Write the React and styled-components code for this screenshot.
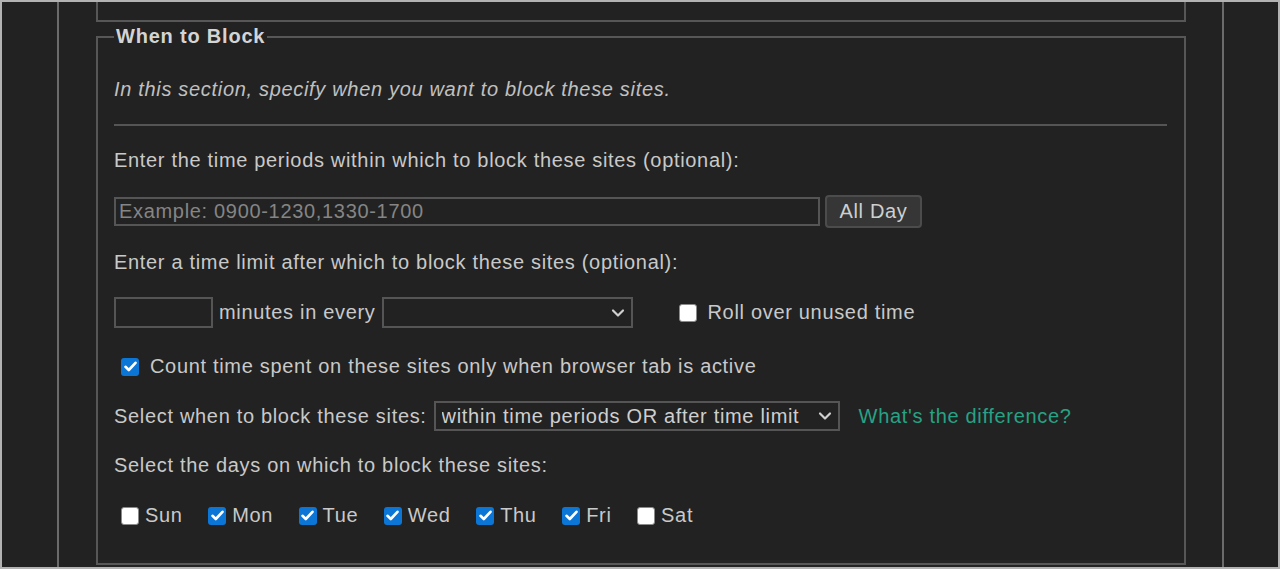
import React from 'react'
import styled, { createGlobalStyle } from 'styled-components'

const Global = createGlobalStyle`
  html, body { margin: 0; padding: 0; background: #222; }
  body { font-family: "Liberation Sans", Arial, sans-serif; }
`

const Frame = styled.div`
  box-sizing: border-box;
  height: 569px;
  border: 2px solid #b3b3b3;
  background: #222;
  padding-left: 55px;
  overflow: hidden;
  display: flex;
`

const Column = styled.div`
  width: 1167px;
  box-sizing: border-box;
  border-left: 2px solid #6b6b6b;
  border-right: 2px solid #6b6b6b;
  padding: 0 36px 0 37px;
`

const PrevBox = styled.div`
  height: 18px;
  border: 2px solid #575757;
  border-top: none;
`

const Fieldset = styled.fieldset`
  margin: 3px 0 0;
  border: 2px solid #575757;
  padding: 0 17px 36px 16px;
  min-width: 0;
`

const Legend = styled.legend`
  padding: 0 2px;
  font-size: 20px;
  line-height: 23px;
  font-weight: bold;
  letter-spacing: 0.8px;
  color: #d4d4d4;
`

const Body = styled.div`
  display: flex;
  flex-direction: column;
  gap: 23px;
  padding-top: 30px;
  font-size: 20px;
  line-height: 23px;
  letter-spacing: 0.68px;
  color: #c9c9c9;
`

const Desc = styled.div`
  font-style: italic;
  color: #c0c0c0;
`

const Rule = styled.div`
  height: 2px;
  background: #555;
`

const Text = styled.div``

const Row = styled.div`
  display: flex;
  align-items: center;
  height: ${p => p.$h || 23}px;
  margin-top: ${p => p.$mt || 0}px;
`

const Field = styled.input`
  box-sizing: border-box;
  width: ${p => p.$w}px;
  height: ${p => p.$h}px;
  background: #222;
  border: 2px solid #555;
  color: #c9c9c9;
  font: 20px "Liberation Sans", Arial, sans-serif;
  letter-spacing: 0.68px;
  padding: 0 3px;
  outline: none;
  &::placeholder { color: #858585; }
`

const Button = styled.button`
  box-sizing: border-box;
  width: 97px;
  height: 33px;
  margin-left: 5px;
  background: #363636;
  border: 2px solid #4c4c4c;
  border-radius: 4px;
  color: #cfcfcf;
  font: 20px "Liberation Sans", Arial, sans-serif;
  letter-spacing: 0.68px;
  padding: 0;
`

const SelectWrap = styled.div`
  position: relative;
  margin: 0 ${p => p.$mr || 0}px 0 ${p => p.$ml || 0}px;
`

const Select = styled.select`
  box-sizing: border-box;
  appearance: none;
  width: ${p => p.$w}px;
  height: ${p => p.$h}px;
  background: #222;
  border: 2px solid #555;
  border-radius: 0;
  color: #cfcfcf;
  font: 20px "Liberation Sans", Arial, sans-serif;
  letter-spacing: 0.68px;
  padding: 0 0 0 6px;
  outline: none;
`

const Chevron = styled.svg`
  position: absolute;
  right: 8px;
  top: 50%;
  margin-top: -5px;
  pointer-events: none;
`

const Label = styled.span`
  margin: 0 ${p => p.$mr || 0}px 0 ${p => p.$ml || 0}px;
`

const Box = styled.span`
  box-sizing: border-box;
  display: inline-flex;
  align-items: center;
  justify-content: center;
  width: 18px;
  height: 18px;
  margin-left: ${p => p.$ml || 0}px;
  border-radius: 3px;
  background: ${p => (p.$on ? '#0c76d6' : '#fff')};
  border: ${p => (p.$on ? 'none' : '1px solid #8a8a8a')};
  flex-shrink: 0;
`

const Link = styled.a`
  margin-left: 19px;
  color: #27a284;
  text-decoration: none;
`

const Day = styled.label`
  display: flex;
  align-items: center;
  gap: 6px;
`

const Days = styled(Row)`
  gap: 25.5px;
  padding-left: 7px;
`

const Check = ({ on, ml }) => (
  <Box $on={on} $ml={ml}>
    {on && (
      <svg width="13" height="11" viewBox="0 0 13 11">
        <path d="M1.5 5.8 L4.8 9 L11.5 1.8" fill="none" stroke="#fff" strokeWidth="2.6" strokeLinecap="round" strokeLinejoin="round" />
      </svg>
    )}
  </Box>
)

const ChevronIcon = () => (
  <Chevron width="14" height="10" viewBox="0 0 14 10">
    <path d="M2 2.5 L7 7.5 L12 2.5" fill="none" stroke="#d0d0d0" strokeWidth="2.2" strokeLinecap="round" strokeLinejoin="round" />
  </Chevron>
)

const days = [
  ['Sun', false], ['Mon', true], ['Tue', true], ['Wed', true],
  ['Thu', true], ['Fri', true], ['Sat', false],
]

export default function App() {
  return (
    <>
      <Global />
      <Frame>
        <Column>
          <PrevBox />
          <Fieldset>
            <Legend>When to Block</Legend>
            <Body>
              <Desc>In this section, specify when you want to block these sites.</Desc>
              <Rule />
              <Text>Enter the time periods within which to block these sites (optional):</Text>
              <Row $h={33}>
                <Field $w={706} $h={29} placeholder="Example: 0900-1230,1330-1700" />
                <Button>All Day</Button>
              </Row>
              <Text>Enter a time limit after which to block these sites (optional):</Text>
              <Row $h={31}>
                <Field $w={99} $h={31} />
                <Label $ml={6}>minutes in every</Label>
                <SelectWrap $ml={6}>
                  <Select $w={251} $h={31}><option></option></Select>
                  <ChevronIcon />
                </SelectWrap>
                <Check ml={46} />
                <Label $ml={11}>Roll over unused time</Label>
              </Row>
              <Row $mt={4}>
                <Check on ml={7} />
                <Label $ml={11}>Count time spent on these sites only when browser tab is active</Label>
              </Row>
              <Row $h={30}>
                <Label>Select when to block these sites:</Label>
                <SelectWrap $ml={7}>
                  <Select $w={406} $h={30}><option>within time periods OR after time limit</option></Select>
                  <ChevronIcon />
                </SelectWrap>
                <Link href="#">What's the difference?</Link>
              </Row>
              <Text>Select the days on which to block these sites:</Text>
              <Days $mt={4}>
                {days.map(([d, on]) => (
                  <Day key={d}>
                    <Check on={on} />
                    <span>{d}</span>
                  </Day>
                ))}
              </Days>
            </Body>
          </Fieldset>
        </Column>
      </Frame>
    </>
  )
}
